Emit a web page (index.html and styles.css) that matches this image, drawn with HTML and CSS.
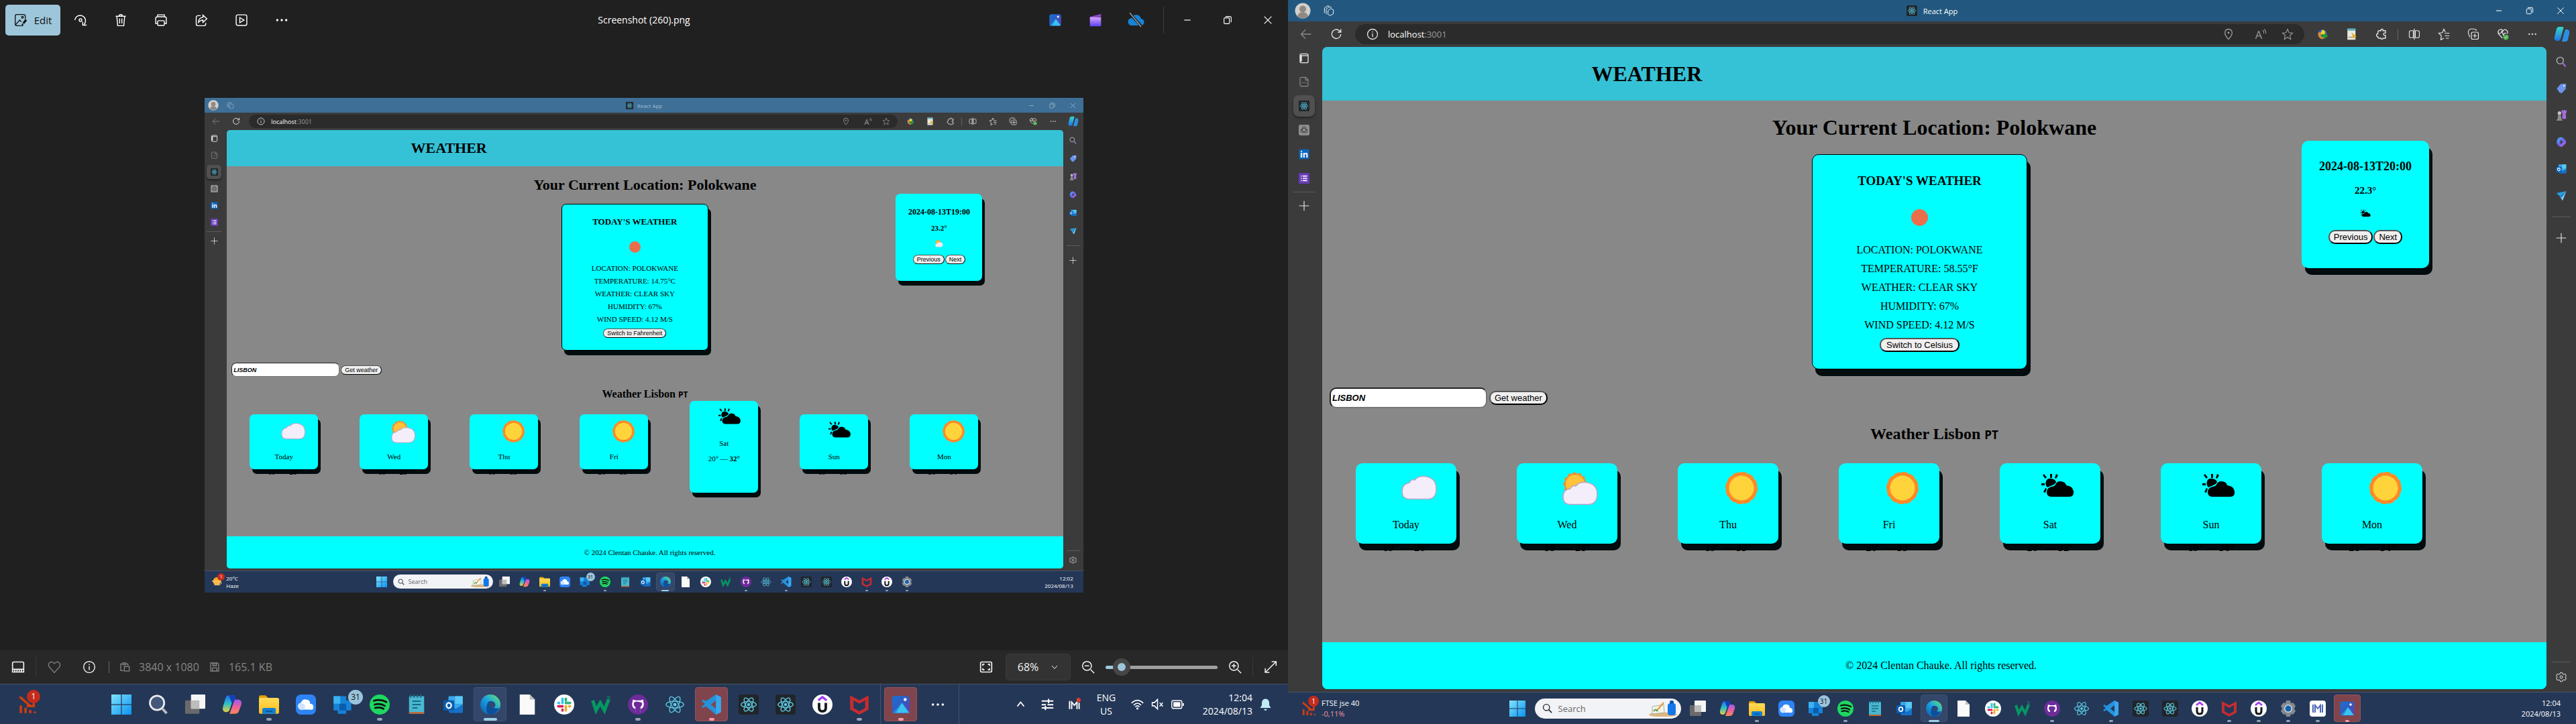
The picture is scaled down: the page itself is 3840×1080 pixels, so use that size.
FILE: index.html
```
<!DOCTYPE html>
<html lang="en">
<head>
<meta charset="utf-8">
<title>React App</title>
<link rel="stylesheet" href="styles.css">
</head>
<body>
<svg class="sprite" width="0" height="0" aria-hidden="true">
  <defs>
    <linearGradient id="gWin" x1="0" y1="0" x2="1" y2="1"><stop offset="0" stop-color="#7fe4ff"/><stop offset="1" stop-color="#0a93f0"/></linearGradient>
    <linearGradient id="gFold" x1="0" y1="0" x2="0" y2="1"><stop offset="0" stop-color="#ffdb57"/><stop offset="1" stop-color="#fdbe1c"/></linearGradient>
    <linearGradient id="gCopA" x1="0" y1="0" x2="0" y2="1"><stop offset="0" stop-color="#1a6df0"/><stop offset=".5" stop-color="#2cc0c8"/><stop offset="1" stop-color="#e8cf3a"/></linearGradient>
    <linearGradient id="gCopB" x1="0" y1="0" x2="0" y2="1"><stop offset="0" stop-color="#9a5cf0"/><stop offset=".5" stop-color="#ea5fa0"/><stop offset="1" stop-color="#ff8a50"/></linearGradient>
    <linearGradient id="gEdge" x1="0" y1="1" x2="1" y2="0"><stop offset="0" stop-color="#0c59a4"/><stop offset=".5" stop-color="#1b9de2"/><stop offset="1" stop-color="#66eb6e"/></linearGradient>
    <linearGradient id="gPho" x1="0" y1="0" x2="1" y2="1"><stop offset="0" stop-color="#1173d4"/><stop offset="1" stop-color="#5a3fb0"/></linearGradient>
    <linearGradient id="gClip" x1="0" y1="0" x2="0" y2="1"><stop offset="0" stop-color="#d9a5fa"/><stop offset="1" stop-color="#5a41f2"/></linearGradient>
    <linearGradient id="gBlue" x1="0" y1="0" x2="0" y2="1"><stop offset="0" stop-color="#39b6f5"/><stop offset="1" stop-color="#0c5cb8"/></linearGradient>
    <linearGradient id="gOffice" x1="0" y1="0" x2="1" y2="1"><stop offset="0" stop-color="#46b5f5"/><stop offset=".5" stop-color="#6a63e8"/><stop offset="1" stop-color="#c66be8"/></linearGradient>
    <linearGradient id="gTeal" x1="0" y1="0" x2="0" y2="1"><stop offset="0" stop-color="#35d7c6"/><stop offset="1" stop-color="#1f74e8"/></linearGradient>
  </defs>

  <symbol id="edit" viewBox="0 0 24 24"><g fill="none" stroke="currentColor" stroke-width="1.6"><path d="M12 22H5a3 3 0 0 1-3-3V5a3 3 0 0 1 3-3h12a3 3 0 0 1 3 3v5M3 20l7-8 3 3"/><circle cx="15" cy="7" r="1.6"/></g><path d="M20 10l3 3-5 6-3-2zM14 18l3 2q-1 4-5 3 2-1 2-5z" fill="currentColor"/></symbol>
  <symbol id="rotate" viewBox="0 0 24 24"><g fill="none" stroke="currentColor" stroke-width="1.7"><path d="M2 12A9.500 9.500 0 1 1 18 20"/><path d="M23 21h-7v-6"/><circle cx="12" cy="12" r="2.400"/></g></symbol>
  <symbol id="trash" viewBox="0 0 24 24"><g fill="none" stroke="currentColor" stroke-width="1.7"><path d="M3 5h18M9 5q0-3 3-3t3 3M5 5l1.500 17h11L19 5M10 9v9M14 9v9"/></g></symbol>
  <symbol id="print" viewBox="0 0 24 24"><g fill="none" stroke="currentColor" stroke-width="1.7"><path d="M6 6V2.500h12V6M6 18H2.500v-9q0-3 3-3h13q3 0 3 3v9H18"/><rect x="6" y="13" width="12" height="8.500" rx="1.500"/></g></symbol>
  <symbol id="share" viewBox="0 0 24 24"><g fill="none" stroke="currentColor" stroke-width="1.700"><path d="M11 4H6a3 3 0 0 0-3 3v12a3 3 0 0 0 3 3h11a3 3 0 0 0 3-3v-2"/><path d="M15 3l7 6.500-7 6.500v-4q-5 0-8 4 0-8 8-9z"/></g></symbol>
  <symbol id="play" viewBox="0 0 24 24"><g fill="none" stroke="currentColor" stroke-width="1.700"><rect x="2.500" y="2.500" width="19" height="19" rx="3"/><path d="M9 7.500l7.500 4.500L9 16.500z"/></g></symbol>
  <symbol id="dots" viewBox="0 0 24 24"><g fill="currentColor"><circle cx="4" cy="12" r="2"/><circle cx="12" cy="12" r="2"/><circle cx="20" cy="12" r="2"/></g></symbol>
  <symbol id="photos" viewBox="0 0 24 24"><rect x="1.500" y="1.500" width="21" height="21" rx="4" fill="url(#gPho)"/><path d="M4 22l8-11q1-1.400 2 0l8 11z" fill="#38c3f0"/><path d="M2 22l10-11 1-.5L6 22z" fill="#1a8fe0"/><circle cx="17" cy="6" r="1.800" fill="#fff"/></symbol>
  <symbol id="clip" viewBox="0 0 24 24"><path d="M2 6l20-5v5L2 8z" fill="#8b46c9"/><rect x="2" y="7" width="20" height="16" rx="1" fill="url(#gClip)"/></symbol>
  <symbol id="cloudoff" viewBox="0 0 24 24"><path d="M6 20a5.500 5.500 0 0 1 0-11Q8 4 13 4t7 6a5 5 0 0 1-1 10z" fill="#1583d8"/><path d="M3 2l18 20" stroke="#202020" stroke-width="4"/><path d="M3 1l17 21" stroke="#9a9a9a" stroke-width="1.500"/></symbol>
  <symbol id="min" viewBox="0 0 24 24"><path d="M5 12h14" stroke="currentColor" stroke-width="1.800"/></symbol>
  <symbol id="restore" viewBox="0 0 24 24"><g fill="none" stroke="currentColor" stroke-width="1.700"><rect x="4" y="7" width="12" height="13" rx="2"/><path d="M7 4h10q3 0 3 3v10"/></g></symbol>
  <symbol id="close" viewBox="0 0 24 24"><path d="M4 4l16 16M20 4L4 20" stroke="currentColor" stroke-width="1.700"/></symbol>
  <symbol id="film" viewBox="0 0 24 24"><path d="M2 5q0-2 2-2h16q2 0 2 2v16H2zM2 16h20M6 17v4M10 17v4M14 17v4M18 17v4" fill="none" stroke="currentColor" stroke-width="2"/></symbol>
  <symbol id="heart" viewBox="0 0 24 24"><path d="M12 22L3 12Q0 7 4 4t8 2q4-5 8-2t1 8z" fill="none" stroke="currentColor" stroke-width="1.400"/></symbol>
  <symbol id="info" viewBox="0 0 24 24"><g fill="none" stroke="currentColor" stroke-width="1.700"><circle cx="12" cy="12" r="10"/><path d="M12 10.500v7M12 6.500v2"/></g></symbol>
  <symbol id="dims" viewBox="0 0 24 24"><g fill="none" stroke="currentColor" stroke-width="2"><path d="M9 20H3V5h5M14 5h5v4M8 3h6v4H8z"/><rect x="11" y="11" width="11" height="10"/></g></symbol>
  <symbol id="floppy" viewBox="0 0 24 24"><path d="M3 3h15l3 3v15H3zM8 3v6h8V3M7 21v-7h10v7M12 4v3" fill="none" stroke="currentColor" stroke-width="2"/></symbol>
  <symbol id="fit" viewBox="0 0 24 24"><g fill="none" stroke="currentColor" stroke-width="2"><rect x="2" y="3" width="20" height="18" rx="2"/><path d="M6 10V7h3M15 7h3v3M18 14v3h-3M9 17H6v-3"/></g></symbol>
  <symbol id="chev" viewBox="0 0 24 24"><path d="M4 8l8 9 8-9" fill="none" stroke="currentColor" stroke-width="2"/></symbol>
  <symbol id="chevup" viewBox="0 0 24 24"><path d="M4 17l8-10 8 10" fill="none" stroke="currentColor" stroke-width="2.600"/></symbol>
  <symbol id="zoomout" viewBox="0 0 24 24"><path d="M16.500 16.500L23 23M6 10h8" stroke="currentColor" stroke-width="1.800"/><circle cx="10" cy="10" r="8" fill="none" stroke="currentColor" stroke-width="1.800"/></symbol>
  <symbol id="zoomin" viewBox="0 0 24 24"><path d="M16.500 16.500L23 23M6 10h8M10 6v8" stroke="currentColor" stroke-width="1.800"/><circle cx="10" cy="10" r="8" fill="none" stroke="currentColor" stroke-width="1.800"/></symbol>
  <symbol id="expand" viewBox="0 0 24 24"><path d="M14 2.500h8V10M22 2.500L2.500 21.500M2.500 14v7.500H10" fill="none" stroke="currentColor" stroke-width="1.800"/></symbol>

  <symbol id="avatar" viewBox="0 0 24 24"><circle cx="12" cy="12" r="11.500" fill="#d2cfcc"/><circle cx="12" cy="9.500" r="5" fill="#8f8984"/><path d="M4 20q2-6 8-6t8 6a11.500 11.500 0 0 1-16 0z" fill="#8f8984"/></symbol>
  <symbol id="spaces" viewBox="0 0 24 24"><g fill="none" stroke="currentColor" stroke-width="1.400"><path d="M10 12l6-5 6 3v9l-8 4-4-3z"/><path d="M6 20V8l7-5 5 2M2 17V6l7-5 4 1"/></g></symbol>
  <symbol id="atom" viewBox="0 0 24 24"><g fill="none" stroke="#5cc8e0" stroke-width="1.100"><ellipse cx="12" cy="12" rx="10.500" ry="4"/><ellipse cx="12" cy="12" rx="10.500" ry="4" transform="rotate(60 12 12)"/><ellipse cx="12" cy="12" rx="10.500" ry="4" transform="rotate(120 12 12)"/></g><circle cx="12" cy="12" r="2" fill="#5cc8e0"/></symbol>
  <symbol id="react" viewBox="0 0 24 24"><rect width="24" height="24" rx="3" fill="#212529"/><g fill="none" stroke="#5cc8e0" stroke-width="1.100"><ellipse cx="12" cy="12" rx="9" ry="3.500"/><ellipse cx="12" cy="12" rx="9" ry="3.500" transform="rotate(60 12 12)"/><ellipse cx="12" cy="12" rx="9" ry="3.500" transform="rotate(120 12 12)"/></g><circle cx="12" cy="12" r="1.800" fill="#5cc8e0"/></symbol>
  <symbol id="back" viewBox="0 0 24 24"><path d="M22 12H3M11 3l-9 9 9 9" fill="none" stroke="currentColor" stroke-width="1.700"/></symbol>
  <symbol id="refresh" viewBox="0 0 24 24"><path d="M21 12a9 9 0 1 1-3-7l3 3M21 2v6h-6" fill="none" stroke="currentColor" stroke-width="1.900"/></symbol>
  <symbol id="pin" viewBox="0 0 24 24"><path d="M12 22Q4 14 5 8t7-6 7 6-7 14z" fill="none" stroke="currentColor" stroke-width="1.700"/><circle cx="12" cy="9" r="2" fill="currentColor"/></symbol>
  <symbol id="aloud" viewBox="0 0 24 24"><text x="1" y="21" font-family="Open Sans" font-size="22" fill="currentColor">A</text><path d="M16 4q3 3 2 7M19 2q4 4 3 9" fill="none" stroke="currentColor" stroke-width="1.500"/></symbol>
  <symbol id="star" viewBox="0 0 24 24"><path d="M12 2l3 7 7 .7-5.300 5 1.600 7.300L12 18l-6.300 4 1.600-7.300L2 9.700 9 9z" fill="none" stroke="currentColor" stroke-width="1.500"/></symbol>
  <symbol id="idm" viewBox="0 0 24 24"><circle cx="12" cy="12" r="9" fill="#2866c8"/><path d="M12 3q8 2 5 10l-6 2-3-5z" fill="#f1cf2c"/><path d="M4 8l5 1v7l8 3-6 3Q2 19 4 8z" fill="#e8882a"/><path d="M10 12h7V8l6 8-8 6v-4h-6z" fill="#23943a"/></symbol>
  <symbol id="docclick" viewBox="0 0 24 24"><rect x="3" y="1" width="16" height="22" fill="#ece9df"/><path d="M3 1h16v4H3z" fill="#58b0c0"/><path d="M5 18h9" stroke="#999" stroke-width="2"/><path d="M11 8l10 9-6 4z" fill="#e0ac22"/></symbol>
  <symbol id="puzzle" viewBox="0 0 24 24"><path d="M7 5h4q-1-3 2-3t2 3h5v5q-4-1-4 2t4 2v6h-5q0 2-2 2t-2-2H7q-2 0-2-3-3 0-3-3t3-3V8q0-3 2-3z" fill="none" stroke="currentColor" stroke-width="1.700"/></symbol>
  <symbol id="split" viewBox="0 0 24 24"><path d="M10 5H5q-3 0-3 3v8q0 3 3 3h5zM14 5h5q3 0 3 3v8q0 3-3 3h-5zM12 1v22" fill="none" stroke="currentColor" stroke-width="1.500"/></symbol>
  <symbol id="favs" viewBox="0 0 24 24"><path d="M12 20l-6 3 1-8-5-5 7-1 3-7 3 6M14 10h9M14 15h9M16 20h6" fill="none" stroke="currentColor" stroke-width="1.600"/></symbol>
  <symbol id="collect" viewBox="0 0 24 24"><g fill="none" stroke="currentColor" stroke-width="1.600"><rect x="8" y="8" width="14" height="14" rx="3"/><path d="M15 11v8M11 15h8M5 18Q0 8 3 4t11-2q4 0 4 3"/></g></symbol>
  <symbol id="health" viewBox="0 0 24 24"><path d="M11 20L3 11Q1 5 6 3t6 3q3-5 7-2t2 7M3 10h5l2-4 3 8 2-4h4" fill="none" stroke="currentColor" stroke-width="1.600"/><circle cx="18" cy="18" r="5.500" fill="#4caf50"/><path d="M15 18l2 2 4-4" fill="none" stroke="#fff"/></symbol>
  <symbol id="copilotblue" viewBox="0 0 24 24"><path d="M8 1h5q2 0 1 3L10 19q-1 3-4 3H4q-4-1-3-6L4 4q1-3 4-3z" fill="url(#gTeal)"/><path d="M17 5h3q4 1 3 6l-2 9q-1 3-4 3h-5l4-15z" fill="#2b8fe8"/></symbol>
  <symbol id="tabs" viewBox="0 0 24 24"><rect x="3" y="2" width="18" height="20" rx="3" fill="none" stroke="currentColor" stroke-width="2"/><path d="M5 5v14" stroke="currentColor" stroke-width="4"/><path d="M4 6h16" stroke="currentColor" stroke-width="2"/></symbol>
  <symbol id="page" viewBox="0 0 24 24"><path d="M6 2h10l5 5v12q0 3-3 3H6q-3 0-3-3V5q0-3 3-3zM15 3v5h6M7 14h2M11 14h2M15 14h2" fill="none" stroke="currentColor" stroke-width="1.700"/></symbol>
  <symbol id="gpt" viewBox="0 0 24 24"><rect width="24" height="24" rx="4" fill="#8e8e8e"/><g fill="none" stroke="#4b4b4b" stroke-width="1.400"><rect x="8" y="4" width="8" height="13" rx="4"/><rect x="8" y="4" width="8" height="13" rx="4" transform="rotate(120 12 12)"/><rect x="8" y="4" width="8" height="13" rx="4" transform="rotate(240 12 12)"/></g></symbol>
  <symbol id="linkedin" viewBox="0 0 24 24"><rect x="1" y="1" width="22" height="22" rx="2" fill="#0a66c2"/><text x="3" y="19" font-family="Open Sans" font-weight="700" font-size="19" fill="#fff">in</text></symbol>
  <symbol id="forms" viewBox="0 0 24 24"><rect width="24" height="24" rx="2" fill="#673ab7"/><path d="M5 7h2M5 12h2M5 17h2M9 7h10M9 12h10M9 17h10" stroke="#fff" stroke-width="2.600"/></symbol>
  <symbol id="plus" viewBox="0 0 24 24"><path d="M12 1v22M1 12h22" stroke="currentColor" stroke-width="1.700"/></symbol>
  <symbol id="lens" viewBox="0 0 24 24"><circle cx="9.500" cy="9.500" r="7.500" fill="none" stroke="#b7b7b7" stroke-width="2"/><path d="M15 15l7 8" stroke="#a970dc" stroke-width="3"/></symbol>
  <symbol id="tag" viewBox="0 0 24 24"><path d="M11 2l10-1q2 0 2 3l-1 9-9 10-5-2-6-9z" fill="#6b93ea"/><circle cx="18" cy="6" r="2" fill="#dbe6ff"/></symbol>
  <symbol id="chess" viewBox="0 0 24 24"><path d="M13 0h3v2h2V0h3v2h2V0h1v6l-2 2 1 12h-9l1-12-2-2z" fill="#a56ddf"/><circle cx="8" cy="7" r="4" fill="#c6c3c0"/><path d="M5 11h6l1 8 3 5H1l3-5z" fill="#8f8c8a"/></symbol>
  <symbol id="office" viewBox="0 0 24 24"><path d="M9 1q6-1 10 4 5 6 3 10l-9 8q-10-2-11-9Q1 4 9 1zm1 6v10l6-5z" fill="url(#gOffice)" fill-rule="evenodd"/></symbol>
  <symbol id="outlook" viewBox="0 0 24 24"><rect x="6" y="2" width="17" height="18" rx="1" fill="#38a7ea"/><path d="M14 2h9v9h-9z" fill="#5ac8f5"/><path d="M6 12l9 5 8-5v9q0 1-1 1H7z" fill="#1671c8"/><rect x="0" y="7" width="13" height="12" rx="1.500" fill="#0b5cad"/><ellipse cx="6.500" cy="13" rx="2.800" ry="3.200" fill="none" stroke="#fff" stroke-width="1.800"/></symbol>
  <symbol id="plane" viewBox="0 0 24 24"><path d="M1 6l22-4-8 21-6-10z" fill="#2b9fe0"/><path d="M9 13L23 2l-8 21z" fill="#7fd4f5"/><path d="M9 13L23 2 13 16z" fill="#1674b8"/></symbol>
  <symbol id="gear" viewBox="0 0 24 24"><path d="M10 2h4l1 3 3 1 3-1 2 4-2 3 2 3-2 4-3-1-3 1-1 3h-4l-1-3-3-1-3 1-2-4 2-3-2-3 2-4 3 1 3-1z" fill="none" stroke="currentColor" stroke-width="1.500"/><circle cx="12" cy="12" r="3" fill="none" stroke="currentColor" stroke-width="1.500"/></symbol>

  <symbol id="stocks" viewBox="0 0 24 24"><path d="M2 2l14 12M20 4v10h-9" fill="none" stroke="#d13c0f" stroke-width="3"/><path d="M2 13h3v10H2zM8 16h3v7H8zM14 19h3v4h-3zM20 21h3v2h-3z" fill="#d13c0f"/></symbol>
  <symbol id="haze" viewBox="0 0 24 24"><circle cx="12" cy="11" r="9.500" fill="#f8a81e"/><path d="M0 11h22M3 15.500h21M5 20h15" stroke="#fbd999" stroke-width="1.800"/></symbol>
  <symbol id="windows" viewBox="0 0 24 24"><path d="M0 0h11.500v11.500H0zM12.500 0H24v11.500H12.500zM0 12.500h11.500V24H0zM12.500 12.500H24V24H12.500z" fill="url(#gWin)"/></symbol>
  <symbol id="find" viewBox="0 0 24 24"><circle cx="10.500" cy="10" r="8.500" fill="#44587b" stroke="#ececee" stroke-width="2.200"/><path d="M16.500 16.500l5.500 6" stroke="#b9b9be" stroke-width="3"/></symbol>
  <symbol id="findline" viewBox="0 0 24 24"><circle cx="10" cy="10" r="7.500" fill="none" stroke="#2b2b33" stroke-width="2.200"/><path d="M15.500 15.500l7 7" stroke="#2b2b33" stroke-width="2.800"/></symbol>
  <symbol id="taskview" viewBox="0 0 24 24"><rect x="0" y="7" width="17" height="16" rx="1" fill="#6a6a6a"/><rect x="7" y="0" width="17" height="17" rx="1" fill="#f6f6f6"/><path d="M7 7h10v10H7z" fill="#bdbdbd"/></symbol>
  <symbol id="copilot" viewBox="0 0 24 24"><path d="M8 1h7l-6 17q-1 3-4 3H4q-4-1-3-6L4 5q1-4 4-4z" fill="url(#gCopA)"/><path d="M16 6h4q4 1 3 6l-3 8q-1 3-5 3H9l5-14q1-3 2-3z" fill="url(#gCopB)"/><path d="M8 1h6q2 0 3 5-3-1-5 5z" fill="#1640b8"/></symbol>
  <symbol id="folder" viewBox="0 0 24 24"><path d="M0 3q0-2 2-2h6l3 3v5H0z" fill="#e3a008"/><rect y="4" width="24" height="19" rx="2" fill="url(#gFold)"/><path d="M4 23v-5q0-2 2-2h12q2 0 2 2v5z" fill="#1180d4"/><path d="M8 20h8" stroke="#075594" stroke-width="1.500"/></symbol>
  <symbol id="cloudapp" viewBox="0 0 24 24"><rect width="24" height="24" rx="6" fill="#2f84f5"/><path d="M7 18a4 4 0 0 1-1-8Q8 5 12 6q5 0 5 5 4 0 4 4t-4 3z" fill="#fff"/><circle cx="7" cy="14.500" r="4" fill="#cfe3ff"/></symbol>
  <symbol id="mail" viewBox="0 0 24 24"><path d="M1 2h15v5h6v12h-6v4H6v-4H1z" fill="#1583d8"/><path d="M1 2h8v9H1z" fill="#3bb2f2"/><path d="M8 11h8v8H8z" fill="#0a5dab"/></symbol>
  <symbol id="spotify" viewBox="0 0 24 24"><circle cx="12" cy="12" r="12" fill="#1ed760"/><path d="M5 7.500q8-2.500 15 1.500M6 12q7-2 12 1.500M6.500 16q6-1.500 10 1" fill="none" stroke="#111" stroke-width="2.200" stroke-linecap="round"/></symbol>
  <symbol id="notepad" viewBox="0 0 24 24"><rect x="3" y="2" width="18" height="21" rx="1" fill="#49b8d0"/><path d="M3 21h18v2H3z" fill="#c5632b"/><path d="M5 0v4M9 0v4M13 0v4M17 0v4" stroke="#1c6b85" stroke-width="1.500"/><path d="M7 8h10M7 12h10M7 16h6" stroke="#176a84" stroke-width="1.600"/></symbol>
  <symbol id="edge" viewBox="0 0 24 24"><circle cx="12" cy="12" r="12" fill="url(#gEdge)"/><path d="M8 12q1-5 6-4 4 1 4 5l-2 3q4 1 7 0-4 8-12 8Q5 21 8 12z" fill="#0e4f9c"/><path d="M11 11q2-3 5-1t0 6q-6 0-5-5z" fill="#35486a"/></symbol>
  <symbol id="file" viewBox="0 0 24 24"><path d="M3 0h12l6 6v18H3z" fill="#fafafa"/><path d="M15 0v6h6z" fill="#bdbdbd"/></symbol>
  <symbol id="slack" viewBox="0 0 24 24"><circle cx="12" cy="12" r="12" fill="#fff"/><g stroke-width="3" stroke-linecap="round"><path d="M10 5v5M5 10h1" stroke="#36c5f0"/><path d="M14 10h5M14 5v2" stroke="#2eb67d"/><path d="M14 14v5M18 14h1" stroke="#ecb22e"/><path d="M5 14h5M10 18v1" stroke="#e01e5a"/></g></symbol>
  <symbol id="w3" viewBox="0 0 24 24"><path d="M2 7l4 12 5-9 5 9 5-13" fill="none" stroke="#059862" stroke-width="4"/><text x="18" y="8" font-family="Open Sans" font-size="9" fill="#059862">3</text></symbol>
  <symbol id="github" viewBox="0 0 24 24"><circle cx="12" cy="12" r="12" fill="#6e2c9a"/><path d="M9 21v-4q-4 0-4-6l1-5 3 1h6l3-1 1 5q0 6-4 6v4z" fill="#fff"/><path d="M9 15q-2-1-2-4t5-2.500 5 2.500-2 4v7H9z" fill="#6e2c9a"/></symbol>
  <symbol id="vscode" viewBox="0 0 24 24"><path d="M17 0l6 3v18l-6 3L5 14l-3 2-2-1 4-4-4-3 2-2 3 2zm0 7l-6 5 6 5z" fill="#2492dc" fill-rule="evenodd"/><path d="M17 0l6 3v18l-6 3z" fill="#3aa6ee"/></symbol>
  <symbol id="udemy" viewBox="0 0 24 24"><circle cx="12" cy="12" r="12" fill="#fff"/><path d="M7 7l5-4 5 4" fill="none" stroke="#a435f0" stroke-width="2.600"/><path d="M8 10v6q0 4 4 4t4-4v-6" fill="none" stroke="#16171a" stroke-width="3"/></symbol>
  <symbol id="mcafee" viewBox="0 0 24 24"><path d="M1 1l11 6 11-6v17l-11 6-11-6zm4 6v9l7 4 7-4V7l-7 4z" fill="#c62c30" fill-rule="evenodd"/></symbol>
  <symbol id="cog" viewBox="0 0 24 24"><path d="M9 0h6l1 4 3-1 4 5-2 4 2 4-4 5-3-1-1 4H9l-1-4-3 1-4-5 2-4-2-4 4-5 3 1z" fill="#858a90"/><circle cx="12" cy="12" r="6" fill="#d5dbe0"/><circle cx="12" cy="12" r="4.500" fill="#1161b0"/></symbol>
  <symbol id="mapp" viewBox="0 0 24 24"><rect width="24" height="24" rx="4" fill="#fff"/><path d="M5 18V6M8 18V7l4 5 4-5v11M19 18V6" fill="none" stroke="#4a62b8" stroke-width="2"/></symbol>
  <symbol id="mtray" viewBox="0 0 24 24"><path d="M3 21V6M7 21V8l5 6 5-6v13M21 21V9" fill="none" stroke="#fff" stroke-width="2.400"/><circle cx="20" cy="4" r="4" fill="#e03a2c"/></symbol>
  <symbol id="sliders" viewBox="0 0 24 24"><path d="M1 6h22M1 13h8M11 13h0M9 19h14M1 19h6M12 13h11M14 2v8M8 15v8" stroke="#fff" stroke-width="2.600"/></symbol>
  <symbol id="wifi" viewBox="0 0 24 24"><g fill="none" stroke="#fff" stroke-width="2"><path d="M1 10q11-11 22 0M5 14q7-8 14 0M8 17q4-4 8 0"/></g><circle cx="12" cy="20" r="2" fill="#fff"/></symbol>
  <symbol id="mute" viewBox="0 0 24 24"><path d="M2 9h4l6-6v18l-6-6H2zM16 9l6 7M22 9l-6 7" fill="none" stroke="#fff" stroke-width="1.900"/></symbol>
  <symbol id="battery" viewBox="0 0 24 24"><rect x="1" y="5" width="19" height="15" rx="3" fill="none" stroke="#fff" stroke-width="1.800"/><rect x="4" y="8" width="13" height="9" fill="#fff"/><path d="M22.500 10v5" stroke="#fff" stroke-width="2.500"/></symbol>
  <symbol id="bell" viewBox="0 0 24 24"><path d="M2 19l3-5V9q1-7 7-7t7 7v5l3 5zM9 21h6q-1 3-3 3t-3-3z" fill="#c0ebf5"/></symbol>
  <symbol id="searchart" viewBox="0 0 44 24"><ellipse cx="22" cy="21" rx="21" ry="3.500" fill="#dfb582"/><path d="M6 9l17-3 1 12-18 2z" fill="#f4f4ee" stroke="#9bb88a"/><path d="M12 16L23 3" stroke="#f0933a" stroke-width="2"/><path d="M8 16q3-5 6 0" stroke="#4ea650" stroke-width="2" fill="none"/><rect x="29" y="4" width="12" height="18" rx="4" fill="#1277e8"/><rect x="32" y="0" width="6" height="5" rx="2" fill="#0b55b0"/></symbol>

  <symbol id="sun" viewBox="0 0 60 60"><circle cx="33" cy="30" r="20.500" fill="#ff8a28" stroke="#ff8a28" stroke-width="7" stroke-dasharray="5 5.730" stroke-linecap="round"/><circle cx="33" cy="30" r="21" fill="#ff8a28"/><circle cx="33" cy="30" r="18.500" fill="#ffd43a"/></symbol>
  <symbol id="cloud" viewBox="0 0 60 60"><path d="M17 46.500Q7 46 7 35T18 22q3-6 8-4 4-6 14-5.500Q58 14 58 31T43 46.500z" fill="#f3eefa" stroke="#b5a8c6" stroke-width="1.500"/></symbol>
  <symbol id="suncloud" viewBox="0 0 60 60"><circle cx="25" cy="24" r="16" fill="#ff8a28" stroke="#ff8a28" stroke-width="3" stroke-dasharray="4 4"/><circle cx="25" cy="24" r="14" fill="#ffc23a"/><path d="M17 54.500Q7 54 7 43T18 31q3-6 8-4 4-6 14-5.500Q58 23 58 39T43 54.500z" fill="#f3eefa" stroke="#b5a8c6" stroke-width="1.500"/></symbol>
  <symbol id="dark" viewBox="0 0 60 60"><path d="M9 29Q5 25 7 20t8-4 7 5q-1 3-6 5t-7 3zM14 43q-6-1-6-7t7-8q4 0 6-3 2-5 7-5 8 0 9 6 10 1 11 9t-7 8zM13 9h3v6h-3zM2 11l2-2 4 5-2 2zM22 9l3 2-3 5-2-1zM0 23h5v3H0zM3 36l3-6 2 1-2 6z"/></symbol>
</svg>

<main class="monitors">
  <!-- Left monitor: photo viewer -->
  <section class="monitor">
    <header class="viewer-bar">
      <div class="viewer-tools">
        <button class="edit-btn"><svg><use href="#edit"/></svg>Edit</button>
        <button aria-label="Rotate"><svg><use href="#rotate"/></svg></button>
        <button aria-label="Delete"><svg><use href="#trash"/></svg></button>
        <button aria-label="Print"><svg><use href="#print"/></svg></button>
        <button aria-label="Share"><svg><use href="#share"/></svg></button>
        <button aria-label="Slideshow"><svg><use href="#play"/></svg></button>
        <button aria-label="More"><svg><use href="#dots"/></svg></button>
      </div>
      <h1 class="viewer-title">Screenshot (260).png</h1>
      <div class="viewer-window">
        <button aria-label="Photos"><svg><use href="#photos"/></svg></button>
        <button aria-label="Clipchamp"><svg><use href="#clip"/></svg></button>
        <button aria-label="OneDrive"><svg class="wide"><use href="#cloudoff"/></svg></button>
        <span class="vline"></span>
        <button aria-label="Minimize"><svg class="slim"><use href="#min"/></svg></button>
        <button aria-label="Restore"><svg class="slim"><use href="#restore"/></svg></button>
        <button aria-label="Close"><svg class="slim"><use href="#close"/></svg></button>
      </div>
    </header>

    <div class="stage">
      <div class="screen screen--preview">
        <div class="tabbar">
          <div class="tabbar-start"><svg class="avatar"><use href="#avatar"/></svg><svg class="spaces"><use href="#spaces"/></svg></div>
          <div class="tab-title"><svg><use href="#react"/></svg>React App</div>
          <div class="tabbar-end"><button aria-label="Minimize"><svg><use href="#min"/></svg></button><button aria-label="Restore"><svg><use href="#restore"/></svg></button><button aria-label="Close"><svg><use href="#close"/></svg></button></div>
        </div>
        <div class="toolbar">
          <button class="nav-back" aria-label="Back"><svg><use href="#back"/></svg></button><button class="nav-refresh" aria-label="Refresh"><svg><use href="#refresh"/></svg></button>
          <div class="address"><svg><use href="#info"/></svg><span class="url">localhost<span class="port">:3001</span></span><svg class="muted geo"><use href="#pin"/></svg><svg class="muted"><use href="#aloud"/></svg><svg class="muted"><use href="#star"/></svg></div>
          <div class="extensions"><button aria-label="Download manager"><svg><use href="#idm"/></svg></button><button aria-label="Page clicker"><svg><use href="#docclick"/></svg></button><button aria-label="Extensions"><svg><use href="#puzzle"/></svg></button><span class="tool-line"></span><button aria-label="Split screen"><svg><use href="#split"/></svg></button><button aria-label="Favorites"><svg><use href="#favs"/></svg></button><button aria-label="Collections"><svg><use href="#collect"/></svg></button><button aria-label="Essentials"><svg><use href="#health"/></svg></button><button aria-label="Settings"><svg class="more"><use href="#dots"/></svg></button><button class="copilot" aria-label="Copilot"><svg><use href="#copilotblue"/></svg></button></div>
        </div>
        <div class="browser-body">
          <nav class="rail rail--tabs"><a href="#"><svg><use href="#tabs"/></svg></a><a href="#" class="dim"><svg><use href="#page"/></svg></a><a href="#" class="current"><svg><use href="#react"/></svg></a><a href="#"><svg><use href="#gpt"/></svg></a><a href="#"><svg><use href="#linkedin"/></svg></a><a href="#"><svg><use href="#forms"/></svg></a><hr><a href="#"><svg><use href="#plus"/></svg></a></nav>
          <article class="weather">
            <header class="weather-head"><h1>WEATHER</h1></header>
            <div class="weather-main">
              <h2>Your Current Location: Polokwane</h2>
              <div class="now">
                <section class="today"><h3>TODAY'S WEATHER</h3><span class="disc"></span><ul><li>LOCATION: POLOKWANE</li><li>TEMPERATURE: 14.75°C</li><li>WEATHER: CLEAR SKY</li><li>HUMIDITY: 67%</li><li>WIND SPEED: 4.12 M/S</li></ul><button class="pill">Switch to Fahrenheit</button></section>
                <section class="hourly"><h4>2024-08-13T19:00</h4><strong>23.2°</strong><svg viewBox="6 7 54 50"><use href="#suncloud" width="60" height="60"/></svg><div class="pager"><button class="pill">Previous</button><button class="pill">Next</button></div></section>
              </div>
              <form class="lookup"><input type="text" value="LISBON" aria-label="City"><button type="button" class="pill">Get weather</button></form>
              <h3 class="place">Weather Lisbon <span>PT</span></h3>
              <ol class="days">
                <li><svg><use href="#cloud"/></svg><span>Today</span><span>19° — <b>26°</b></span></li>
                <li><svg><use href="#suncloud"/></svg><span>Wed</span><span>18° — <b>28°</b></span></li>
                <li><svg><use href="#sun"/></svg><span>Thu</span><span>19° — <b>33°</b></span></li>
                <li><svg><use href="#sun"/></svg><span>Fri</span><span>20° — <b>33°</b></span></li>
                <li class="open"><svg><use href="#dark"/></svg><span>Sat</span><span>20° — <b>32°</b></span></li>
                <li><svg><use href="#dark"/></svg><span>Sun</span><span>19° — <b>36°</b></span></li>
                <li><svg><use href="#sun"/></svg><span>Mon</span><span>21° — <b>34°</b></span></li>
              </ol>
            </div>
            <footer class="weather-foot">© 2024 Clentan Chauke. All rights reserved.</footer>
          </article>
          <nav class="rail rail--apps"><a href="#"><svg><use href="#lens"/></svg></a><a href="#"><svg><use href="#tag"/></svg></a><a href="#"><svg><use href="#chess"/></svg></a><a href="#"><svg><use href="#office"/></svg></a><a href="#"><svg><use href="#outlook"/></svg></a><a href="#"><svg><use href="#plane"/></svg></a><hr><a href="#"><svg><use href="#plus"/></svg></a><hr class="push"><a href="#" class="last"><svg><use href="#gear"/></svg></a></nav>
        </div>
        <div class="taskbar">
          <div class="widget"><span class="icon-wrap"><svg><use href="#haze"/></svg><span class="badge">1</span></span><span class="lines"><span>20°C</span><span>Haze</span></span></div>
          <div class="apps">
            <a href="#"><svg><use href="#windows"/></svg></a>
            <label class="search"><svg class="glass"><use href="#findline"/></svg><input type="search" placeholder="Search"><svg class="art"><use href="#searchart"/></svg></label>
            <a href="#"><svg><use href="#taskview"/></svg></a><a href="#"><svg><use href="#copilot"/></svg></a><a href="#" class="run"><svg><use href="#folder"/></svg></a><a href="#"><svg><use href="#cloudapp"/></svg></a><a href="#"><svg><use href="#mail"/></svg><span class="badge badge--blue">31</span></a><a href="#" class="run"><svg><use href="#spotify"/></svg></a><a href="#"><svg><use href="#notepad"/></svg></a><a href="#"><svg><use href="#outlook"/></svg></a><a href="#" class="run focus"><svg><use href="#edge"/></svg></a><a href="#"><svg><use href="#file"/></svg></a><a href="#"><svg><use href="#slack"/></svg></a><a href="#"><svg><use href="#w3"/></svg></a><a href="#" class="run"><svg><use href="#github"/></svg></a><a href="#"><svg><use href="#atom"/></svg></a><a href="#" class="run"><svg><use href="#vscode"/></svg></a><a href="#"><svg><use href="#react"/></svg></a><a href="#"><svg><use href="#react"/></svg></a><a href="#"><svg><use href="#udemy"/></svg></a><a href="#" class="run"><svg><use href="#mcafee"/></svg></a><a href="#" class="run"><svg><use href="#udemy"/></svg></a><a href="#" class="run"><svg><use href="#cog"/></svg></a>
          </div>
          <div class="clock"><span>12:02</span><span>2024/08/13</span></div>
        </div>
      </div>
    </div>

    <footer class="viewer-foot">
      <div class="foot-group">
        <button class="film" aria-label="Filmstrip"><svg><use href="#film"/></svg></button><span class="vline"></span>
        <button class="fav" aria-label="Favorite"><svg><use href="#heart"/></svg></button>
        <button class="about" aria-label="File info"><svg><use href="#info"/></svg></button><span class="vline bright"></span>
        <span class="fact"><svg><use href="#dims"/></svg>3840 x 1080</span><span class="fact"><svg><use href="#floppy"/></svg>165.1 KB</span>
      </div>
      <div class="foot-group">
        <button class="fit" aria-label="Fit"><svg><use href="#fit"/></svg></button>
        <button class="zoom-value">68%<svg><use href="#chev"/></svg></button>
        <button class="zoom-out" aria-label="Zoom out"><svg><use href="#zoomout"/></svg></button>
        <input type="range" class="slider" min="0" max="100" value="8" aria-label="Zoom">
        <button class="zoom-in" aria-label="Zoom in"><svg><use href="#zoomin"/></svg></button><span class="vline"></span>
        <button class="full" aria-label="Full screen"><svg><use href="#expand"/></svg></button>
      </div>
    </footer>

    <div class="taskbar taskbar--wide">
      <div class="widget"><span class="icon-wrap"><svg><use href="#stocks"/></svg><span class="badge">1</span></span></div>
      <div class="apps">
        <a href="#"><svg><use href="#windows"/></svg></a><a href="#"><svg><use href="#find"/></svg></a><a href="#"><svg><use href="#taskview"/></svg></a><a href="#"><svg><use href="#copilot"/></svg></a><a href="#" class="run"><svg><use href="#folder"/></svg></a><a href="#"><svg><use href="#cloudapp"/></svg></a><a href="#"><svg><use href="#mail"/></svg><span class="badge badge--blue">31</span></a><a href="#" class="run"><svg><use href="#spotify"/></svg></a><a href="#"><svg><use href="#notepad"/></svg></a><a href="#"><svg><use href="#outlook"/></svg></a><a href="#" class="run focus"><svg><use href="#edge"/></svg></a><a href="#"><svg><use href="#file"/></svg></a><a href="#"><svg><use href="#slack"/></svg></a><a href="#"><svg><use href="#w3"/></svg></a><a href="#" class="run"><svg><use href="#github"/></svg></a><a href="#"><svg><use href="#atom"/></svg></a><a href="#" class="run alert"><svg><use href="#vscode"/></svg></a><a href="#"><svg><use href="#react"/></svg></a><a href="#"><svg><use href="#react"/></svg></a><a href="#"><svg><use href="#udemy"/></svg></a><a href="#" class="run"><svg><use href="#mcafee"/></svg></a>
        <span class="rule"></span><a href="#" class="run alert"><svg><use href="#photos"/></svg></a><a href="#" class="overflow"><svg><use href="#dots"/></svg></a><span class="rule"></span>
      </div>
      <div class="tray">
        <a href="#"><svg class="small"><use href="#chevup"/></svg></a><a href="#"><svg><use href="#sliders"/></svg></a><a href="#"><svg><use href="#mtray"/></svg></a>
        <span class="lang"><span>ENG</span><span>US</span></span>
        <span class="status"><svg><use href="#wifi"/></svg><svg><use href="#mute"/></svg><svg><use href="#battery"/></svg></span>
        <div class="clock"><span>12:04</span><span>2024/08/13</span></div>
        <svg class="bell"><use href="#bell"/></svg>
      </div>
    </div>
  </section>

  <!-- Right monitor: browser -->
  <section class="monitor">
    <div class="screen">
      <div class="tabbar">
        <div class="tabbar-start"><svg class="avatar"><use href="#avatar"/></svg><svg class="spaces"><use href="#spaces"/></svg></div>
        <div class="tab-title"><svg><use href="#react"/></svg>React App</div>
        <div class="tabbar-end"><button aria-label="Minimize"><svg><use href="#min"/></svg></button><button aria-label="Restore"><svg><use href="#restore"/></svg></button><button aria-label="Close"><svg><use href="#close"/></svg></button></div>
      </div>
      <div class="toolbar">
        <button class="nav-back" aria-label="Back"><svg><use href="#back"/></svg></button><button class="nav-refresh" aria-label="Refresh"><svg><use href="#refresh"/></svg></button>
        <div class="address"><svg><use href="#info"/></svg><span class="url">localhost<span class="port">:3001</span></span><svg class="muted geo"><use href="#pin"/></svg><svg class="muted"><use href="#aloud"/></svg><svg class="muted"><use href="#star"/></svg></div>
        <div class="extensions"><button aria-label="Download manager"><svg><use href="#idm"/></svg></button><button aria-label="Page clicker"><svg><use href="#docclick"/></svg></button><button aria-label="Extensions"><svg><use href="#puzzle"/></svg></button><span class="tool-line"></span><button aria-label="Split screen"><svg><use href="#split"/></svg></button><button aria-label="Favorites"><svg><use href="#favs"/></svg></button><button aria-label="Collections"><svg><use href="#collect"/></svg></button><button aria-label="Essentials"><svg><use href="#health"/></svg></button><button aria-label="Settings"><svg class="more"><use href="#dots"/></svg></button><button class="copilot" aria-label="Copilot"><svg><use href="#copilotblue"/></svg></button></div>
      </div>
      <div class="browser-body">
        <nav class="rail rail--tabs"><a href="#"><svg><use href="#tabs"/></svg></a><a href="#" class="dim"><svg><use href="#page"/></svg></a><a href="#" class="current"><svg><use href="#react"/></svg></a><a href="#"><svg><use href="#gpt"/></svg></a><a href="#"><svg><use href="#linkedin"/></svg></a><a href="#"><svg><use href="#forms"/></svg></a><hr><a href="#"><svg><use href="#plus"/></svg></a></nav>
        <article class="weather">
          <header class="weather-head"><h1>WEATHER</h1></header>
          <div class="weather-main">
            <h2>Your Current Location: Polokwane</h2>
            <div class="now">
              <section class="today"><h3>TODAY'S WEATHER</h3><span class="disc"></span><ul><li>LOCATION: POLOKWANE</li><li>TEMPERATURE: 58.55°F</li><li>WEATHER: CLEAR SKY</li><li>HUMIDITY: 67%</li><li>WIND SPEED: 4.12 M/S</li></ul><button class="pill">Switch to Celsius</button></section>
              <section class="hourly"><h4>2024-08-13T20:00</h4><strong>22.3°</strong><svg viewBox="-1 7 50 38"><use href="#dark" width="60" height="60"/></svg><div class="pager"><button class="pill">Previous</button><button class="pill">Next</button></div></section>
            </div>
            <form class="lookup"><input type="text" value="LISBON" aria-label="City"><button type="button" class="pill">Get weather</button></form>
            <h3 class="place">Weather Lisbon <span>PT</span></h3>
            <ol class="days">
              <li><svg><use href="#cloud"/></svg><span>Today</span><span>19° — <b>26°</b></span></li>
              <li><svg><use href="#suncloud"/></svg><span>Wed</span><span>18° — <b>28°</b></span></li>
              <li><svg><use href="#sun"/></svg><span>Thu</span><span>19° — <b>33°</b></span></li>
              <li><svg><use href="#sun"/></svg><span>Fri</span><span>20° — <b>33°</b></span></li>
              <li><svg><use href="#dark"/></svg><span>Sat</span><span>20° — <b>32°</b></span></li>
              <li><svg><use href="#dark"/></svg><span>Sun</span><span>19° — <b>36°</b></span></li>
              <li><svg><use href="#sun"/></svg><span>Mon</span><span>21° — <b>34°</b></span></li>
            </ol>
          </div>
          <footer class="weather-foot">© 2024 Clentan Chauke. All rights reserved.</footer>
        </article>
        <nav class="rail rail--apps"><a href="#"><svg><use href="#lens"/></svg></a><a href="#"><svg><use href="#tag"/></svg></a><a href="#"><svg><use href="#chess"/></svg></a><a href="#"><svg><use href="#office"/></svg></a><a href="#"><svg><use href="#outlook"/></svg></a><a href="#"><svg><use href="#plane"/></svg></a><hr><a href="#"><svg><use href="#plus"/></svg></a><hr class="push"><a href="#" class="last"><svg><use href="#gear"/></svg></a></nav>
      </div>
      <div class="taskbar">
        <div class="widget"><span class="icon-wrap"><svg><use href="#stocks"/></svg><span class="badge">1</span></span><span class="lines"><span>FTSE jse 40</span><span class="loss">-0,11%</span></span></div>
        <div class="apps">
          <a href="#"><svg><use href="#windows"/></svg></a>
          <label class="search"><svg class="glass"><use href="#findline"/></svg><input type="search" placeholder="Search"><svg class="art"><use href="#searchart"/></svg></label>
          <a href="#"><svg><use href="#taskview"/></svg></a><a href="#"><svg><use href="#copilot"/></svg></a><a href="#" class="run"><svg><use href="#folder"/></svg></a><a href="#"><svg><use href="#cloudapp"/></svg></a><a href="#"><svg><use href="#mail"/></svg><span class="badge badge--blue">31</span></a><a href="#" class="run"><svg><use href="#spotify"/></svg></a><a href="#"><svg><use href="#notepad"/></svg></a><a href="#"><svg><use href="#outlook"/></svg></a><a href="#" class="run focus"><svg><use href="#edge"/></svg></a><a href="#"><svg><use href="#file"/></svg></a><a href="#"><svg><use href="#slack"/></svg></a><a href="#"><svg><use href="#w3"/></svg></a><a href="#" class="run"><svg><use href="#github"/></svg></a><a href="#"><svg><use href="#atom"/></svg></a><a href="#" class="run"><svg><use href="#vscode"/></svg></a><a href="#"><svg><use href="#react"/></svg></a><a href="#"><svg><use href="#react"/></svg></a><a href="#"><svg><use href="#udemy"/></svg></a><a href="#" class="run"><svg><use href="#mcafee"/></svg></a><a href="#" class="run"><svg><use href="#udemy"/></svg></a><a href="#" class="run"><svg><use href="#cog"/></svg></a><a href="#" class="run"><svg><use href="#mapp"/></svg></a><a href="#" class="run alert"><svg><use href="#photos"/></svg></a>
        </div>
        <div class="clock"><span>12:04</span><span>2024/08/13</span></div>
      </div>
    </div>
  </section>
</main>
</body>
</html>
```
FILE: styles.css
```
*, *::before, *::after { box-sizing: border-box; }

:root {
  --ui: "Open Sans", "Noto Sans", sans-serif;
  --serif: "Liberation Serif", "Times New Roman", serif;
  --sans: "Liberation Sans", Arial, sans-serif;
  --chrome: #3b3b3b;
  --cyan: #00ffff;
  --task: #243757;
}

body { margin: 0; font-family: var(--ui); background: #202020; }
h1, h2, h3, h4, ul, ol { margin: 0; padding: 0; }
ul, ol { list-style: none; }
a { color: inherit; text-decoration: none; }
button, input { font: inherit; color: inherit; }
button { border: 0; padding: 0; background: none; }
svg { display: block; flex: none; overflow: visible; }
.sprite { position: absolute; }

.monitors { display: grid; grid-template-columns: 1fr 1fr; min-height: 100vh; }
.monitor { display: flex; flex-direction: column; min-width: 0; background: #202020; }

/* Photo viewer */
.viewer-bar { display: grid; grid-template-columns: 1fr auto 1fr; align-items: center; height: 60px; color: #fff; }
.viewer-tools, .viewer-window { display: flex; align-items: center; }
.viewer-tools { padding-left: 8px; }
.viewer-window { justify-content: flex-end; }
.viewer-bar button { display: flex; align-items: center; justify-content: center; width: 60px; height: 46px; }
.viewer-bar svg { width: 20px; height: 20px; }
.viewer-bar svg.wide { width: 28px; height: 24px; }
.viewer-bar svg.slim { width: 16px; height: 16px; }
.viewer-bar .edit-btn { gap: 10px; width: 82px; border-radius: 5px; background: #9dc6da; color: #111; font-size: 15px; }
.viewer-title { font-size: 14px; font-weight: 400; line-height: 20px; }
.viewer-window .vline { height: 40px; margin: 0 5px 0 11px; }
.vline { width: 1px; background: #3a3a3a; }
.stage { display: flex; flex: 1; align-items: center; justify-content: center; }

.viewer-foot { display: flex; align-items: center; justify-content: space-between; height: 50px; background: #282828; color: #f2f2f2; font-size: 16px; }
.foot-group { display: flex; align-items: center; }
.foot-group .vline { height: 30px; }
.foot-group .vline.bright { height: 18px; background: #666; }
.viewer-foot button { display: flex; align-items: center; justify-content: center; height: 40px; }
.viewer-foot svg { width: 20px; height: 20px; }
.film { width: 53px; }
.fav { width: 54px; color: #8a8a8a; }
.about { width: 50px; margin-right: 4px; }
.fact { display: flex; align-items: center; gap: 13px; margin-left: 15px; color: #858585; }
.viewer-foot .fact svg { width: 16px; height: 16px; }
.fit { width: 40px; margin-right: 9px; }
.viewer-foot .zoom-value { width: 97px; gap: 18px; border: 1px solid #3a3a3a; border-radius: 5px; background: #333; }
.viewer-foot .zoom-value svg { width: 12px; height: 12px; }
.zoom-out, .zoom-in { width: 52px; }
.slider { width: 167px; height: 28px; margin: 0; appearance: none; background: none; }
.slider::-webkit-slider-runnable-track { height: 5px; border-radius: 3px; background: linear-gradient(90deg, #9dc6da 12%, #a0a0a0 12%); }
.slider::-webkit-slider-thumb { appearance: none; width: 26px; height: 26px; margin-top: -11px; border: 7px solid #464646; border-radius: 50%; background: #9dc6da; }
.full { width: 52px; }

/* Browser window */
.screen {
  --bar: 32px; --tool: 38px; --icon: 18px;
  display: flex; flex-direction: column; flex: 1; min-width: 0; background: var(--chrome); color: #e6e6e6;
}
.tabbar { display: grid; grid-template-columns: 1fr auto 1fr; align-items: center; height: var(--bar); background: #22587f; font-size: 11px; color: #fff; }
.tabbar-start { display: flex; align-items: center; gap: 19px; padding-left: 10px; }
.tabbar .avatar { width: 24px; height: 24px; }
.tabbar svg { width: 16px; height: 16px; }
.tab-title { display: flex; align-items: center; gap: 9px; }
.tabbar-end { display: flex; justify-content: flex-end; }
.tabbar-end button { display: grid; place-items: center; width: 46px; height: var(--bar); }
.tabbar-end svg { width: 14px; height: 14px; }

.toolbar { display: flex; align-items: center; height: var(--tool); }
.toolbar svg { width: var(--icon); height: var(--icon); }
.toolbar button { display: grid; place-items: center; width: 44px; }
.toolbar .nav-back { width: 54px; color: #8a8a8a; }
.toolbar .nav-refresh { width: 36px; margin-right: 10px; }
.address { display: flex; flex: 1; align-items: center; gap: 22px; height: 30px; padding: 0 16px 0 17px; border-radius: 15px; background: #2b2b2b; }
.url { flex: 1; margin-left: -8px; color: #fff; font-size: 13px; }
.port, .muted { color: #999; }
.geo { margin-right: 8px; }
.extensions { display: flex; align-items: center; padding-left: 5px; }
.tool-line { width: 1px; height: 16px; margin: 0 2px; background: #666; }
.toolbar .more { width: 14px; height: 14px; }
.toolbar .copilot { width: 43px; }
.toolbar .copilot svg { width: 24px; height: 24px; }

.browser-body { display: flex; flex: 1; margin-bottom: 4px; }
.rail { display: flex; flex-direction: column; align-items: center; }
.rail a { display: grid; place-items: center; flex: none; width: 32px; height: 36px; }
.rail svg { width: 16px; height: 16px; }
.rail hr { width: 32px; height: 1px; margin: 2px 0; border: 0; background: #5c5c5c; }
.rail--tabs { width: 51px; padding-right: 4px; }
.rail--tabs a:first-child { height: 34px; }
.rail .dim { color: #8a8a8a; }
.rail .current { height: 32px; margin: 2px 0; border-radius: 8px; background: #505050; box-shadow: 0 2px 3px #222; }
.rail--apps { width: 44px; padding-top: 2px; }
.rail--apps a { height: 40px; }
.rail--apps hr { width: 28px; margin: 11px 0; }
.rail--apps hr.push { margin: auto 0 4px; }
.rail--apps a.last { height: 36px; }

/* Weather page */
.weather { display: flex; flex: 1; flex-direction: column; min-width: 0; border-radius: 8px; overflow: hidden; background: #888; color: #000; font: 16px/20px var(--serif); }
.weather-head { display: flex; align-items: center; height: 80px; padding-left: 22%; background: #35c2d6; }
.weather-head h1 { font-size: 32px; line-height: 36px; }
.weather-main { flex: 1; padding-top: 21px; }
.weather-main h2 { font-size: 32px; line-height: 39px; text-align: center; }
.now { display: grid; grid-template-columns: 40% 40% 20%; align-items: start; }
.today, .hourly { display: flex; flex-direction: column; align-items: center; border-radius: 10px; background: var(--cyan); box-shadow: 5px 10px #020b0e; }
.today { grid-column: 2; width: 321px; height: 321px; margin-top: 20px; padding-top: 28px; border: 1px solid #000; }
.today h3 { font-size: 19px; line-height: 22px; }
.disc { width: 25px; height: 25px; margin: 31px 0 22px; border-radius: 50%; background: #eb6e4b; }
.today li { line-height: 28px; text-align: center; }
.pill { height: 21px; padding: 0 6px; border: 2px outset #000; border-radius: 10px; background: #efefef; font: 13px/15px var(--sans); }
.today .pill { margin-top: 5px; padding: 0 8px; }
.hourly { grid-column: 3; width: 190px; height: 190px; padding-top: 28px; }
.hourly h4 { font-size: 18px; line-height: 20px; }
.hourly strong { margin: 16px 0 18px; font-size: 15px; line-height: 20px; }
.hourly svg { width: 16px; height: 12px; }
.pager { display: flex; gap: 1px; margin-top: 19px; }
.lookup { display: flex; align-items: center; gap: 3px; margin-top: 27px; padding-left: 11px; }
.lookup input { width: 235px; height: 31px; padding: 0 2px; border: 2px solid; border-color: #222 #767676 #767676 #222; border-radius: 10px; background: #fff; font: italic bold 13px/16px var(--sans); }
.place { margin-top: 24px; font-size: 24px; line-height: 28px; text-align: center; }
.place span { font: bold 17px/20px var(--ui); }
.days { display: flex; gap: 90px; margin-top: 30px; padding-left: 50px; }
.days li { display: flex; flex-direction: column; align-items: center; flex: none; width: 150px; height: 120px; padding-top: 7px; border-radius: 10px; background: var(--cyan); box-shadow: 5px 10px #020b0e; }
.days svg { width: 60px; height: 60px; margin: 0 0 15px 34px; }
.days span + span { margin-top: 14px; }
.weather-foot { display: flex; align-items: center; justify-content: center; height: 70px; padding-left: 20px; background: var(--cyan); }

/* Taskbar */
.taskbar { display: grid; grid-template-columns: 1fr auto 1fr; align-items: center; height: 48px; border-top: 1px solid #465369; background: var(--task); color: #fff; font-size: 11px; line-height: 16px; }
.widget { display: flex; align-items: center; gap: 8px; padding-left: 20px; }
.icon-wrap { position: relative; }
.icon-wrap svg { width: 22px; height: 22px; }
.lines, .lang { display: flex; flex-direction: column; }
.loss { color: #f0909e; }
.badge { position: absolute; top: -8px; right: -4px; width: 16px; height: 16px; border-radius: 8px; background: #c42b1c; font-size: 10px; line-height: 16px; text-align: center; }
.badge--blue { top: 4px; right: 1px; width: 18px; height: 18px; border-radius: 9px; background: #9ac4dc; color: #111; line-height: 18px; }
.apps { display: flex; align-items: center; }
.apps a { position: relative; display: grid; place-items: center; width: 44px; height: 47px; }
.apps a svg { position: relative; width: 24px; height: 24px; }
.apps .run::after { content: ""; position: absolute; bottom: 3px; width: 6px; height: 3px; border-radius: 2px; background: #9aa3b3; }
.apps .focus::before, .apps .alert::before { content: ""; position: absolute; inset: 3px 2px; border: 1px solid #42536f; border-radius: 4px; background: #34466a; }
.apps .alert::before { border-color: #8f555b; background: #80454c; }
.apps .focus::after { width: 16px; background: #9fd0e4; }
.apps .alert::after { background: #ff9aa6; }
.search { display: flex; align-items: center; width: 218px; height: 30px; margin: 0 3px 0 4px; padding: 0 5px 0 11px; border-radius: 15px; background: #f2f3f6; }
.search .glass { width: 15px; height: 15px; }
.search input { flex: 1; min-width: 0; padding: 0 0 0 9px; border: 0; outline: 0; background: none; font-size: 13px; }
.search input::placeholder { color: #666; opacity: 1; }
.search .art { width: 44px; height: 24px; }
.clock { display: flex; flex-direction: column; padding-right: 23px; text-align: right; }

.taskbar--wide { grid-template-columns: 153px auto 1fr; height: 60px; font-size: 14px; line-height: 20px; }
.taskbar--wide .widget { padding-left: 26px; }
.taskbar--wide .icon-wrap svg { width: 30px; height: 28px; }
.taskbar--wide .badge { width: 20px; height: 20px; border-radius: 10px; font-size: 12px; line-height: 20px; }
.taskbar--wide .badge--blue { top: 8px; right: -3px; width: 22px; height: 22px; line-height: 22px; border-radius: 11px; }
.taskbar--wide .apps a { width: 55px; height: 59px; }
.taskbar--wide .apps a svg { width: 30px; height: 30px; }
.taskbar--wide .apps .overflow svg { width: 22px; height: 22px; }
.taskbar--wide .apps .run::after { bottom: 5px; width: 8px; height: 4px; }
.taskbar--wide .apps .focus::after { width: 20px; }
.taskbar--wide .apps .focus::before, .taskbar--wide .apps .alert::before { inset: 4px 3px; }
.rule { width: 1px; height: 59px; margin: 0 2px 0 4px; background: #465369; }
.tray { display: flex; align-items: center; justify-content: flex-end; padding-right: 24px; }
.tray a { display: grid; place-items: center; width: 40px; }
.tray svg { width: 19px; height: 19px; }
.tray .small { width: 15px; height: 15px; }
.lang { width: 56px; text-align: center; }
.status { display: flex; gap: 11px; padding: 0 9px; }
.tray .clock { width: 93px; padding: 0; }
.tray .bell { margin-left: 10px; }

/* Reduced copy of the desktop shown inside the viewer */
.screen--preview { --bar: 22px; --tool: 26px; --icon: 12px; flex: none; width: 68.2%; aspect-ratio: 71 / 40; }
.screen--preview .tabbar { background: #3e6f97; color: #a0bccf; font-size: 8px; }
.screen--preview .tabbar-start { gap: 12px; padding-left: 5px; }
.screen--preview .tabbar .avatar { width: 16px; height: 16px; }
.screen--preview .tabbar svg { width: 11px; height: 11px; }
.screen--preview .tab-title { gap: 6px; }
.screen--preview .tabbar-end button { width: 31px; }
.screen--preview .toolbar button { width: 30px; }
.screen--preview .toolbar .nav-back { width: 34px; }
.screen--preview .toolbar .nav-refresh { width: 26px; margin-right: 6px; }
.screen--preview .address { gap: 15px; height: 20px; padding: 0 11px 0 12px; }
.screen--preview .url { margin-left: -6px; font-size: 9px; }
.screen--preview .geo { margin-right: 6px; }
.screen--preview .extensions { padding-left: 4px; }
.screen--preview .tool-line { height: 11px; margin: 0 1px; }
.screen--preview .toolbar .more { width: 10px; }
.screen--preview .toolbar .copilot svg { width: 16px; height: 16px; }
.screen--preview .browser-body { margin-bottom: 3px; }
.screen--preview .rail a { width: 22px; height: 25px; }
.screen--preview .rail svg { width: 11px; height: 11px; }
.screen--preview .rail hr { width: 22px; margin: 1px 0; }
.screen--preview .rail--tabs { width: 33px; padding-right: 5px; }
.screen--preview .rail .current { height: 21px; border-radius: 5px; }
.screen--preview .rail--apps { width: 30px; }
.screen--preview .rail--apps a { height: 27px; }
.screen--preview .rail--apps hr { width: 20px; margin: 8px 0; }
.screen--preview .rail--apps hr.push { margin: auto 0 2px; }
.screen--preview .rail--apps a.last { height: 24px; }

.screen--preview .weather { border-radius: 5px; font-size: 11px; line-height: 14px; }
.screen--preview .weather-head { height: 54px; }
.screen--preview .weather-head h1 { font-size: 22px; line-height: 26px; }
.screen--preview .weather-main { padding-top: 15px; }
.screen--preview .weather-main h2 { font-size: 22px; line-height: 26px; }
.screen--preview .today, .screen--preview .hourly, .screen--preview .days li { border-radius: 7px; box-shadow: 4px 7px #020b0e; }
.screen--preview .today { width: 219px; height: 219px; margin-top: 15px; padding-top: 18px; }
.screen--preview .today h3 { font-size: 13px; line-height: 16px; }
.screen--preview .disc { width: 17px; height: 17px; margin: 21px 0 14px; }
.screen--preview .today li { line-height: 19px; }
.screen--preview .pill { height: 14px; padding: 0 5px; border-width: 1px; border-radius: 7px; font-size: 9px; line-height: 12px; }
.screen--preview .today .pill { margin-top: 4px; }
.screen--preview .hourly { width: 129px; height: 130px; padding-top: 19px; }
.screen--preview .hourly h4 { font-size: 12px; line-height: 16px; }
.screen--preview .hourly strong { margin: 8px 0 10px; font-size: 11px; line-height: 16px; }
.screen--preview .hourly svg { width: 12px; height: 11px; }
.screen--preview .pager { margin-top: 11px; }
.screen--preview .lookup { gap: 2px; margin-top: 18px; padding-left: 7px; }
.screen--preview .lookup input { width: 161px; height: 21px; border-width: 1px; border-radius: 7px; font-size: 9px; line-height: 12px; }
.screen--preview .place { margin-top: 16px; font-size: 16px; line-height: 20px; }
.screen--preview .place span { font-size: 12px; line-height: 16px; }
.screen--preview .days { gap: 62px; margin-top: 20px; padding-left: 34px; }
.screen--preview .days li { width: 102px; height: 82px; padding-top: 5px; }
.screen--preview .days .open { height: 137px; margin-top: -20px; }
.screen--preview .days svg { width: 41px; height: 41px; margin: 0 0 10px 24px; }
.screen--preview .days span + span { margin-top: 9px; }
.screen--preview .weather-foot { height: 48px; padding-left: 14px; }

.screen--preview .taskbar { height: 33px; font-size: 8px; line-height: 11px; }
.screen--preview .widget { gap: 6px; padding-left: 11px; }
.screen--preview .icon-wrap svg { width: 15px; height: 15px; }
.screen--preview .badge { top: -5px; width: 11px; height: 11px; font-size: 7px; line-height: 11px; }
.screen--preview .badge--blue { top: 2px; right: 0; width: 13px; height: 13px; line-height: 13px; }
.screen--preview .apps a { width: 30px; height: 32px; }
.screen--preview .apps a svg { width: 16px; height: 16px; }
.screen--preview .apps .run::after { bottom: 2px; width: 4px; height: 2px; }
.screen--preview .apps .focus::after { width: 11px; }
.screen--preview .apps .focus::before { inset: 2px 1px; }
.screen--preview .search { width: 149px; height: 21px; margin: 0 2px; padding: 0 4px 0 7px; }
.screen--preview .search .glass { width: 10px; height: 10px; }
.screen--preview .search input { padding-left: 6px; font-size: 9px; }
.screen--preview .search .art { width: 30px; height: 16px; }
.screen--preview .clock { padding-right: 15px; }
```
